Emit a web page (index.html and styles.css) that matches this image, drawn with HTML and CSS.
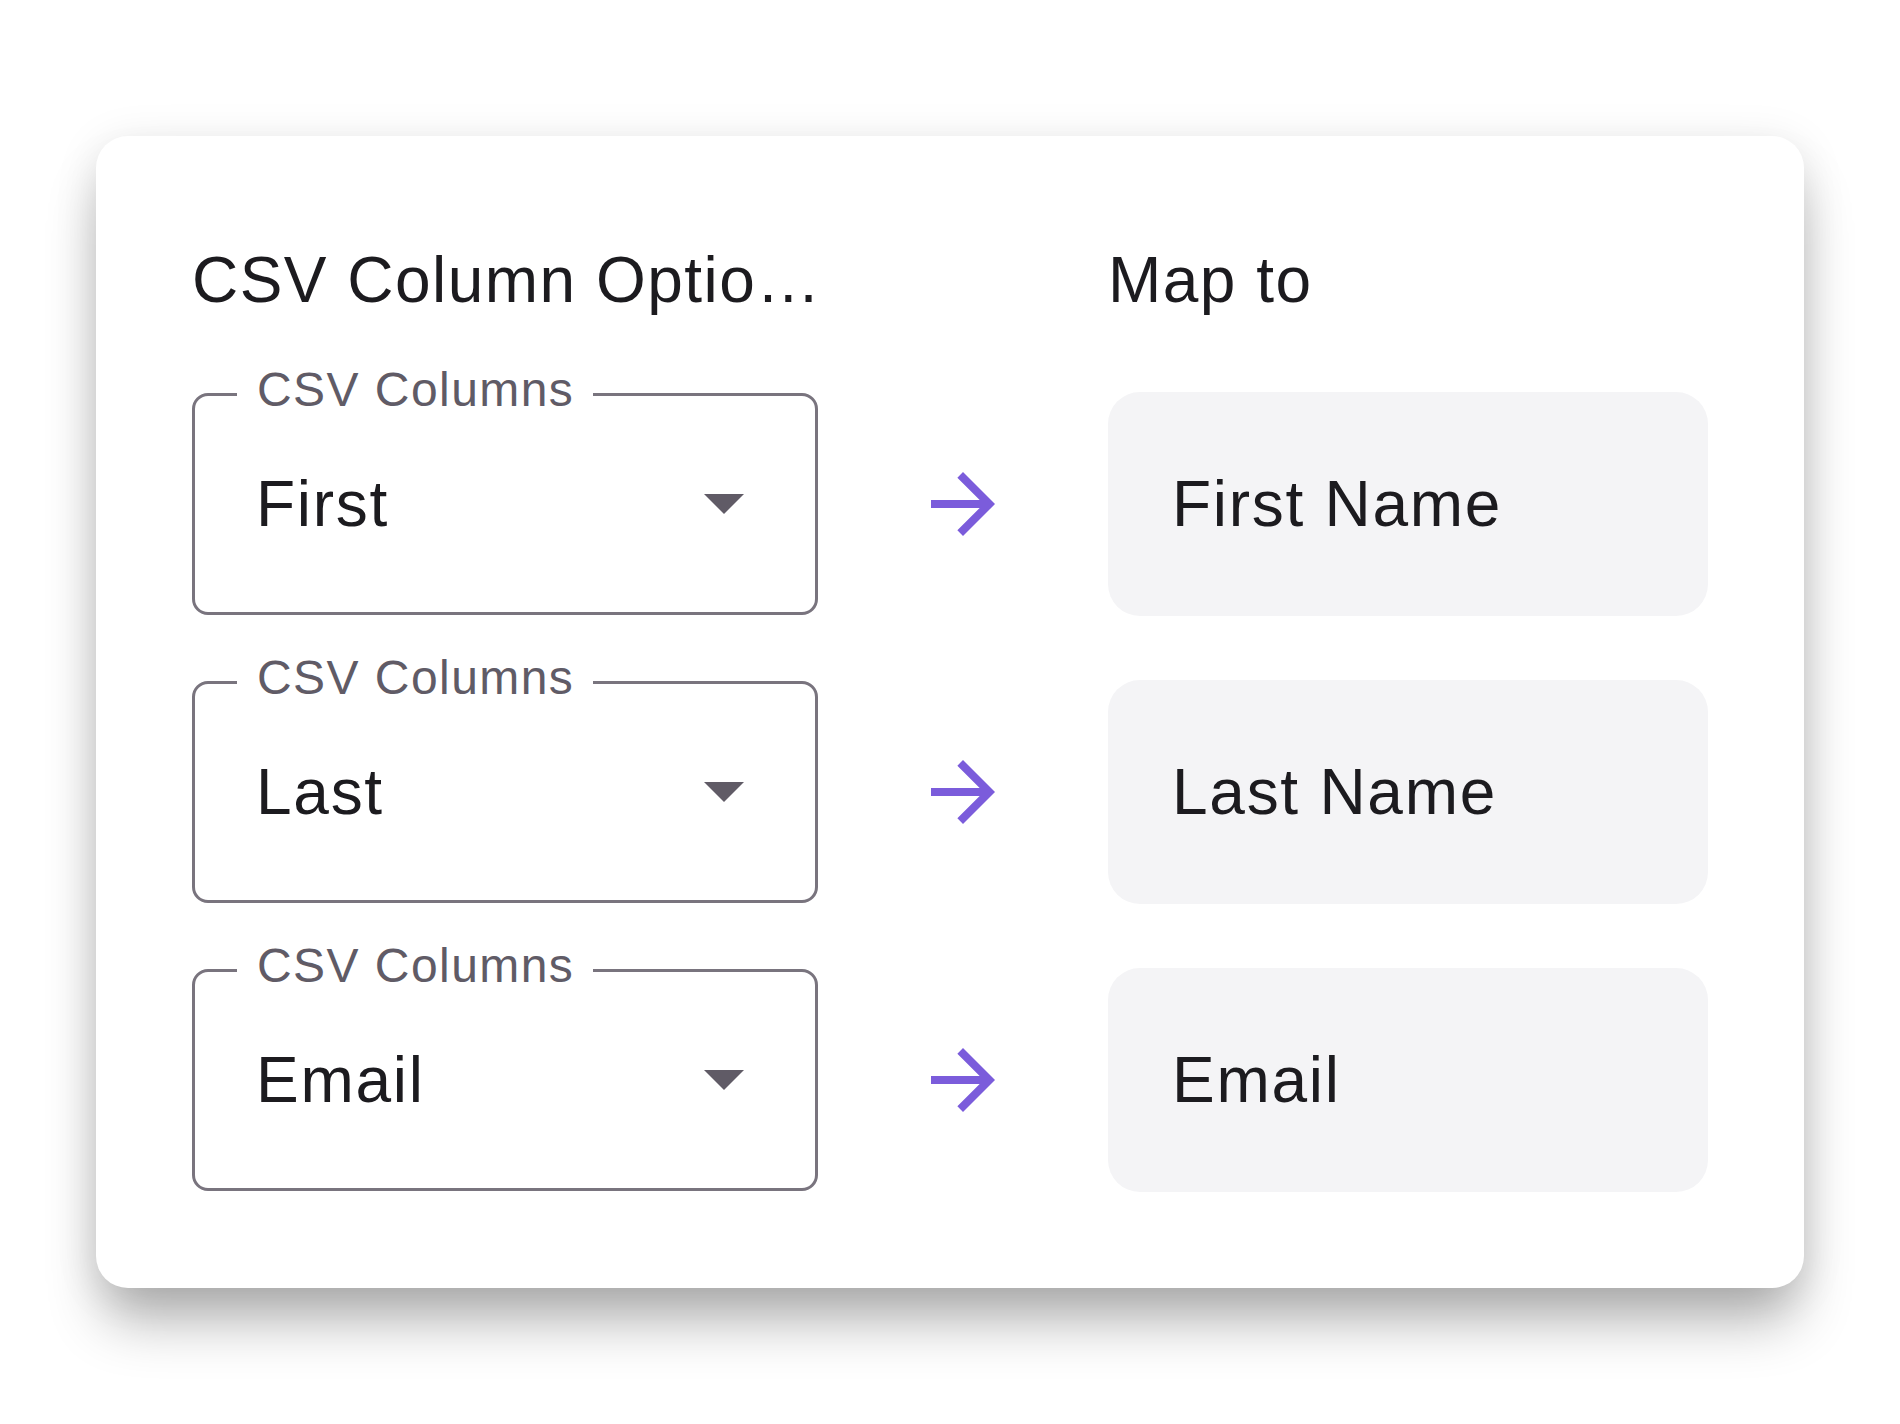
FILE: index.html
```html
<!DOCTYPE html>
<html lang="en">
<head>
<meta charset="utf-8">
<title>CSV Column Mapping</title>
<link rel="stylesheet" href="styles.css">
</head>
<body>
<main class="card">
  <div class="grid heading-row">
    <h2 class="heading">CSV Column Optio…</h2>
    <span></span>
    <h2 class="heading">Map to</h2>
  </div>
  <div class="rows">
    <div class="grid row">
      <div class="select">
        <span class="label">CSV Columns</span>
        <span class="value">First</span>
        <svg class="caret" viewBox="7 10 10 5" width="40" height="20"><path d="M7 10l5 5 5-5z"/></svg>
      </div>
      <svg class="arrow" viewBox="0 0 24 24" width="96" height="96"><path d="M12 4l-1.41 1.41L16.17 11H4v2h12.17l-5.58 5.59L12 20l8-8z"/></svg>
      <div class="target">First Name</div>
    </div>
    <div class="grid row">
      <div class="select">
        <span class="label">CSV Columns</span>
        <span class="value">Last</span>
        <svg class="caret" viewBox="7 10 10 5" width="40" height="20"><path d="M7 10l5 5 5-5z"/></svg>
      </div>
      <svg class="arrow" viewBox="0 0 24 24" width="96" height="96"><path d="M12 4l-1.41 1.41L16.17 11H4v2h12.17l-5.58 5.59L12 20l8-8z"/></svg>
      <div class="target">Last Name</div>
    </div>
    <div class="grid row">
      <div class="select">
        <span class="label">CSV Columns</span>
        <span class="value">Email</span>
        <svg class="caret" viewBox="7 10 10 5" width="40" height="20"><path d="M7 10l5 5 5-5z"/></svg>
      </div>
      <svg class="arrow" viewBox="0 0 24 24" width="96" height="96"><path d="M12 4l-1.41 1.41L16.17 11H4v2h12.17l-5.58 5.59L12 20l8-8z"/></svg>
      <div class="target">Email</div>
    </div>
  </div>
</main>
</body>
</html>
```

FILE: styles.css
```css
* { box-sizing: border-box; }

html, body {
  margin: 0;
  background: #ffffff;
}

body {
  font-family: "Liberation Sans", Arial, sans-serif;
  color: #1c1b1f;
  padding: 136px 96px 136px 96px;
  min-height: 1424px;
}

.card {
  width: 1708px;
  height: 1152px;
  padding: 96px;
  background: #ffffff;
  border-radius: 32px;
  box-shadow: 0 40px 56px -8px rgba(0, 0, 0, 0.3), 0 6px 44px rgba(0, 0, 0, 0.1);
}

.grid {
  display: grid;
  grid-template-columns: 626px 1fr 600px;
  align-items: center;
}

.heading {
  margin: 0;
  font-size: 64px;
  font-weight: 400;
  line-height: 96px;
  letter-spacing: 0.023em;
  white-space: nowrap;
}

.rows {
  margin-top: 64px;
  display: flex;
  flex-direction: column;
  gap: 64px;
}

.row {
  height: 224px;
}

.select {
  position: relative;
  height: 222px;
  border: 3px solid #79747e;
  border-radius: 16px;
  display: flex;
  align-items: center;
  justify-content: space-between;
  padding: 0 71px 0 61px;
}

.label {
  position: absolute;
  top: -34px;
  left: 42px;
  padding: 0 19px 0 20px;
  background: #ffffff;
  color: #605b66;
  font-size: 48px;
  line-height: 56px;
  letter-spacing: 0.03em;
}

.value {
  font-size: 64px;
  letter-spacing: 0.027em;
}

.caret {
  display: block;
  fill: #605b66;
}

.arrow {
  display: block;
  justify-self: center;
  fill: #7b5cdb;
}

.target {
  height: 224px;
  border-radius: 32px;
  background: #f4f4f6;
  display: flex;
  align-items: center;
  padding-left: 64px;
  font-size: 64px;
  letter-spacing: 0.027em;
}
```
